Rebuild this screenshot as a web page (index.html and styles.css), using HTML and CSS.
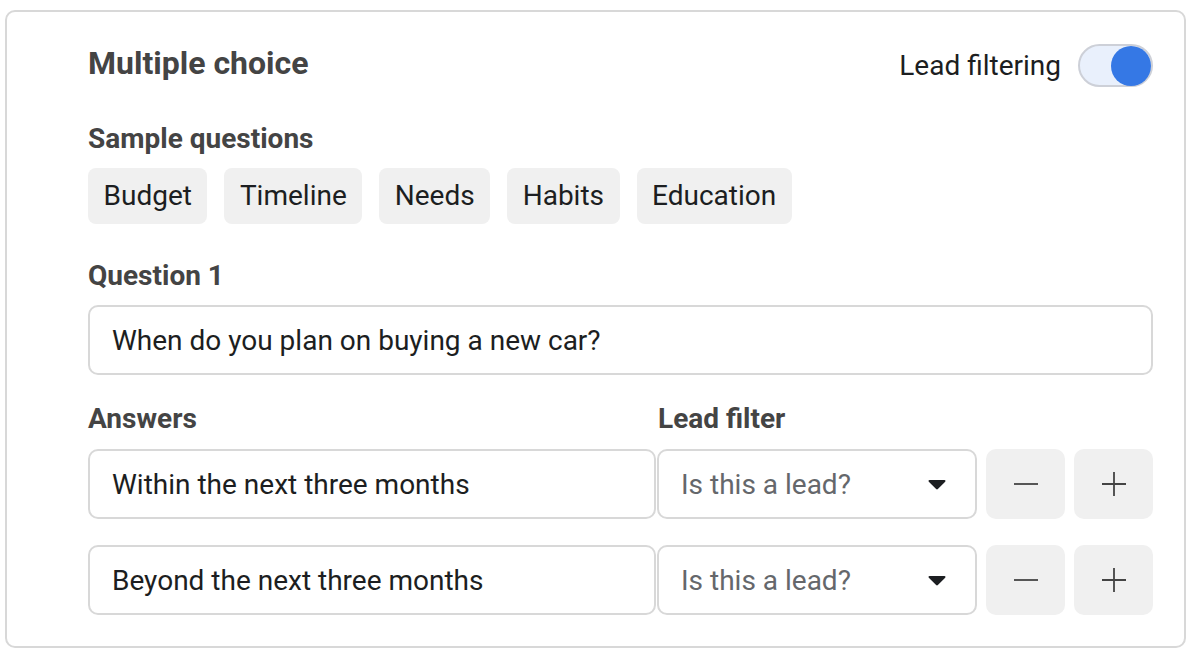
FILE: index.html
```html
<!DOCTYPE html>
<html lang="en">
<head>
  <meta charset="UTF-8">
  <title>Multiple choice</title>
  <link rel="stylesheet" href="styles.css">
</head>
<body>
  <div class="card">
    <div class="header">
      <h2>Multiple choice</h2>
      <div class="toggle-wrap">
        <span>Lead filtering</span>
        <div class="toggle"><div class="knob"></div></div>
      </div>
    </div>

    <div class="label label-sample">Sample questions</div>
    <div class="chips">
      <div class="chip">Budget</div>
      <div class="chip">Timeline</div>
      <div class="chip">Needs</div>
      <div class="chip">Habits</div>
      <div class="chip">Education</div>
    </div>

    <div class="label label-question">Question 1</div>
    <div class="field">When do you plan on buying a new car?</div>

    <div class="answer-head">
      <div class="label col-answer">Answers</div>
      <div class="label">Lead filter</div>
    </div>

    <div class="answer-row">
      <div class="field col-answer">Within the next three months</div>
      <div class="field select">
        <span>Is this a lead?</span>
        <svg width="18" height="11" viewBox="0 0 18 11"><path d="M1.5 1h15a1 1 0 0 1 .7 1.7l-7.3 7.3a1.3 1.3 0 0 1-1.8 0L.8 2.7A1 1 0 0 1 1.5 1z" fill="#1c1e21"/></svg>
      </div>
      <div class="btn"><svg width="26" height="26" viewBox="0 0 26 26"><path d="M1 13h24" stroke="#444" stroke-width="1.8"/></svg></div>
      <div class="btn"><svg width="26" height="26" viewBox="0 0 26 26"><path d="M1 13h24M13 1v24" stroke="#444" stroke-width="1.8"/></svg></div>
    </div>

    <div class="answer-row">
      <div class="field col-answer">Beyond the next three months</div>
      <div class="field select">
        <span>Is this a lead?</span>
        <svg width="18" height="11" viewBox="0 0 18 11"><path d="M1.5 1h15a1 1 0 0 1 .7 1.7l-7.3 7.3a1.3 1.3 0 0 1-1.8 0L.8 2.7A1 1 0 0 1 1.5 1z" fill="#1c1e21"/></svg>
      </div>
      <div class="btn"><svg width="26" height="26" viewBox="0 0 26 26"><path d="M1 13h24" stroke="#444" stroke-width="1.8"/></svg></div>
      <div class="btn"><svg width="26" height="26" viewBox="0 0 26 26"><path d="M1 13h24M13 1v24" stroke="#444" stroke-width="1.8"/></svg></div>
    </div>
  </div>
</body>
</html>
```

FILE: styles.css
```css
body {
  margin: 0;
  padding: 10px 0 0 5px;
  background: #fff;
  font-family: Roboto, "Liberation Sans", sans-serif;
  color: #1c1e21;
}
.card {
  width: 1181px;
  height: 638px;
  box-sizing: border-box;
  border: 2px solid #d8d8d8;
  border-radius: 10px;
  padding: 32px 31px 0 81px;
}
.header {
  display: flex;
  justify-content: space-between;
  align-items: flex-start;
  height: 43px;
}
h2 {
  margin: -2px 0 0;
  font-size: 32px;
  font-weight: 700;
  color: #444;
  line-height: 43px;
}
.toggle-wrap { display: flex; align-items: center; gap: 17px; font-size: 28px; }
.toggle {
  width: 75px;
  height: 43px;
  box-sizing: border-box;
  border: 2px solid #cdd0d8;
  border-radius: 22px;
  background: #e9f0fc;
  display: flex;
  justify-content: flex-end;
  align-items: center;
}
.knob { width: 40px; height: 40px; border-radius: 50%; background: #3578e5; }

.label {
  font-size: 28px;
  font-weight: 700;
  color: #444;
  line-height: 32px;
}
.label-sample { margin-top: 36px; }
.label-question { margin-top: 36px; }

.chips { display: flex; gap: 17px; margin-top: 13px; }
.chip {
  background: #f0f0f0;
  border-radius: 8px;
  padding: 12px 15.5px;
  font-size: 28px;
  line-height: 32px;
}

.field {
  height: 70px;
  box-sizing: border-box;
  border: 2px solid #d8d8d8;
  border-radius: 10px;
  padding: 0 22px;
  display: flex;
  align-items: center;
  font-size: 28px;
  margin-top: 13px;
}

.answer-head { display: flex; margin-top: 28px; }
.col-answer { width: 570px; flex: none; }
.answer-row { display: flex; gap: 9px; margin-top: 14px; }
.answer-row + .answer-row { margin-top: 26px; }
.answer-row .field { margin-top: 0; }
.answer-row .col-answer { width: 568px; margin-right: -8px; }
.select {
  width: 320px;
  justify-content: space-between;
  color: #65676b;
  padding-right: 29px;
}
.btn {
  width: 79px;
  height: 70px;
  border-radius: 10px;
  background: #f0f0f0;
  display: flex;
  align-items: center;
  justify-content: center;
}
```
